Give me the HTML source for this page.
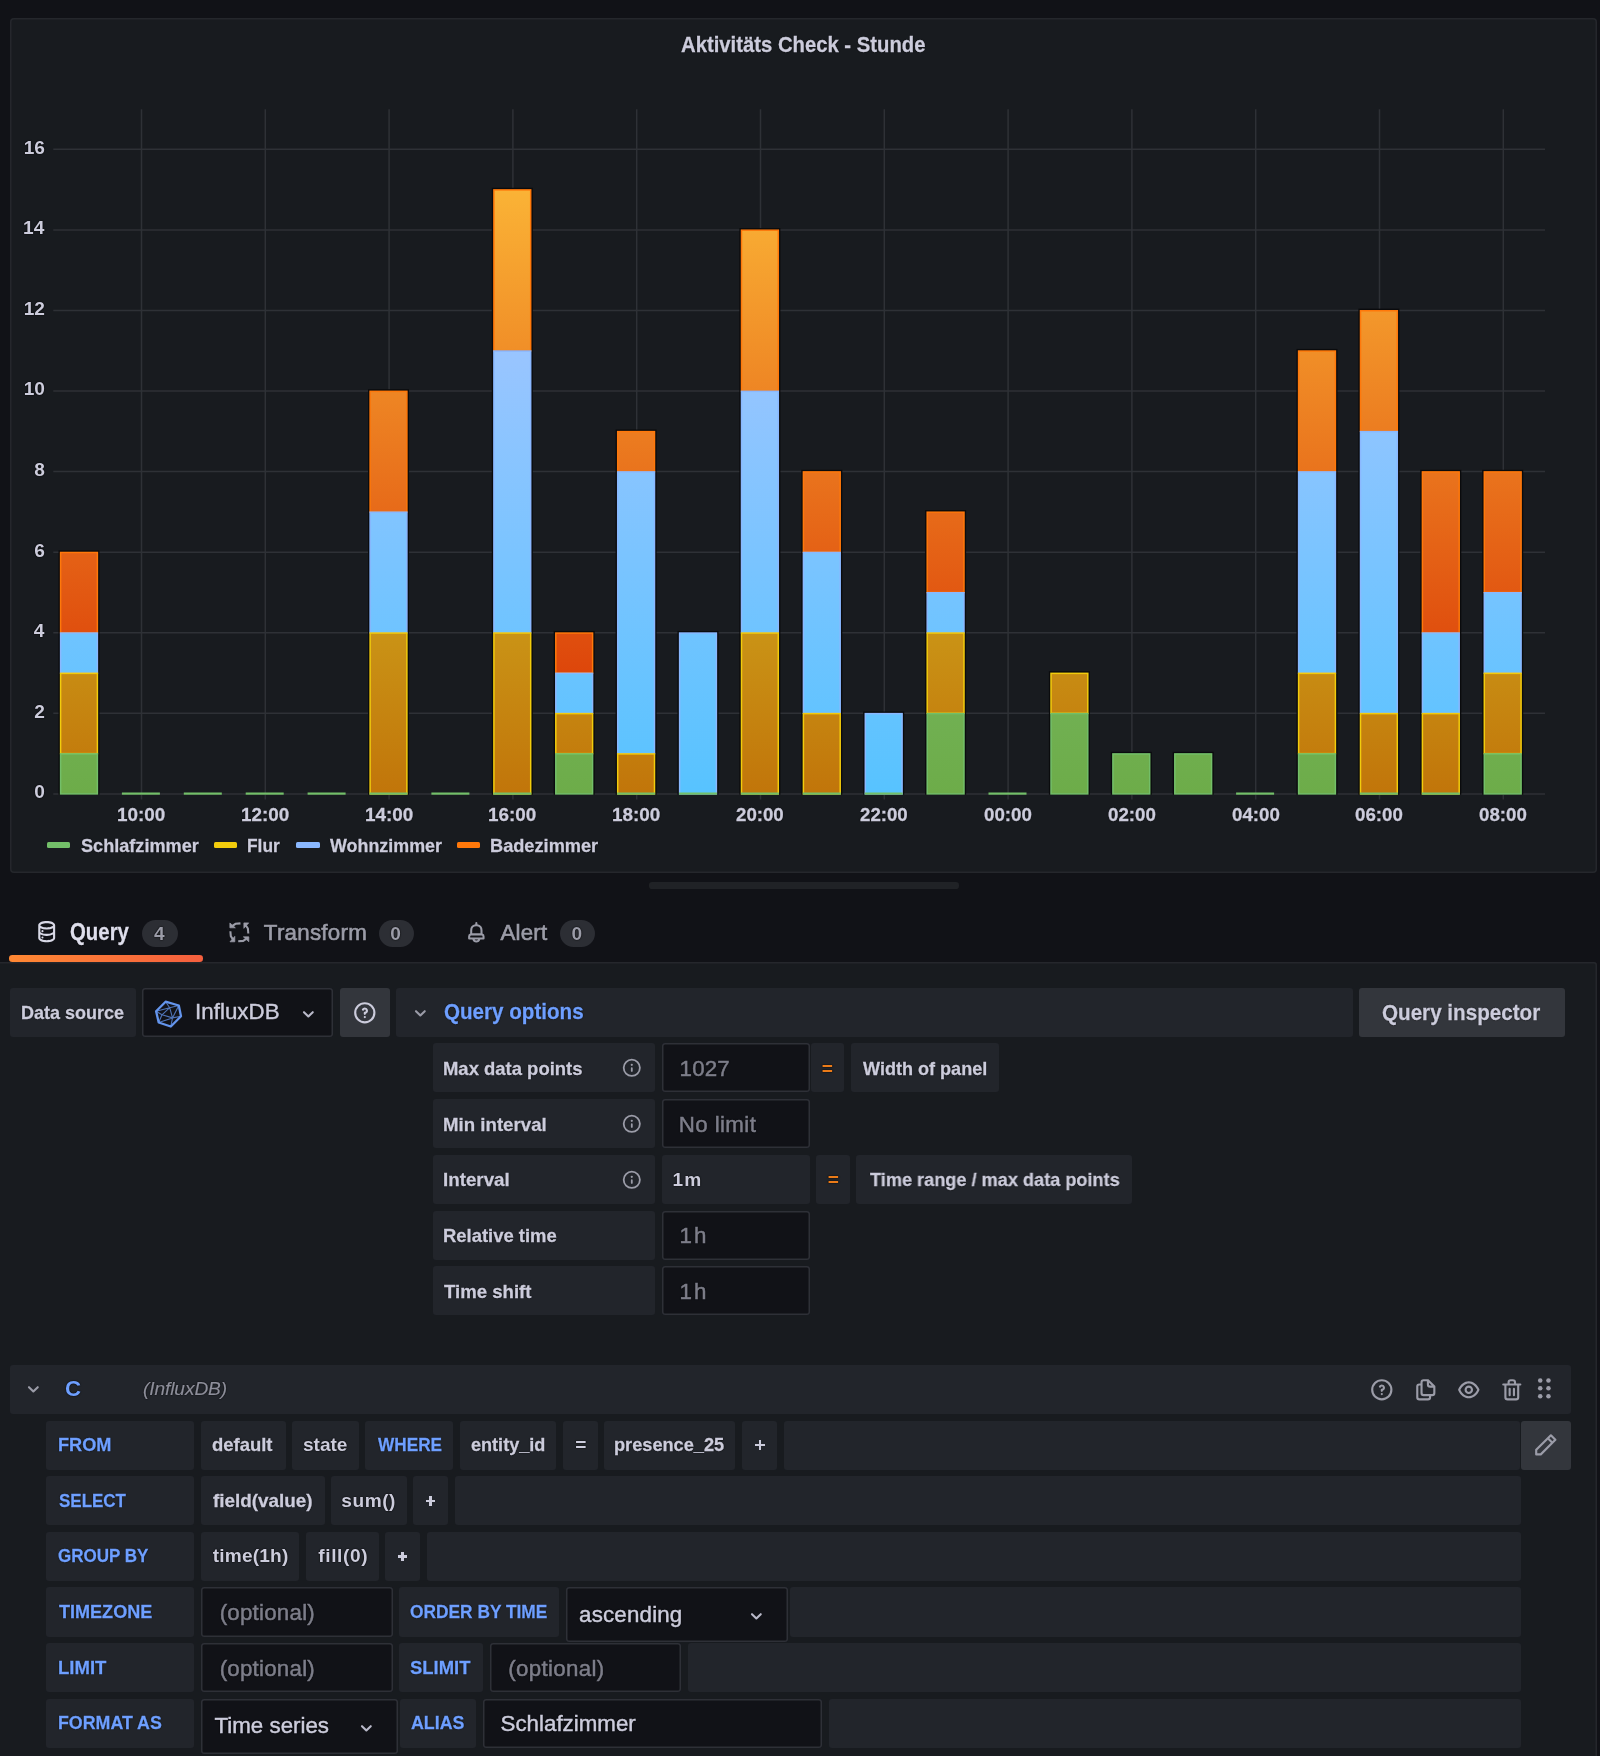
<!DOCTYPE html>
<html lang="de"><head><meta charset="utf-8"><title>Aktivitäts Check - Stunde</title>
<style>
html,body{margin:0;padding:0;background:#111217;}
body{width:1600px;height:1756px;position:relative;overflow:hidden;font-family:"Liberation Sans",sans-serif;}
.b{position:absolute;display:block;}
.t{position:absolute;white-space:pre;display:block;transform-origin:0 0;text-shadow:0 0 1.5px rgba(0,0,0,.95),0 0 1px rgba(0,0,0,.8);}
#root{position:absolute;left:0;top:0;width:1600px;height:1756px;will-change:transform;}
</style></head><body><div id="root">
<div class="b" style="left:9.50px;top:18.40px;width:1587.20px;height:854.20px;background:#181b1f;border-radius:4px;box-shadow:inset 0 0 0 1.5px #25272c;"></div>
<span class="t " style="left:681.09px;top:30.07px;font-size:22.31px;line-height:29px;color:#ccccdc;transform:scaleX(0.9092);font-weight:700;-webkit-text-stroke:0.3px #ccccdc;">Aktivitäts Check - Stunde</span>
<svg class="b" style="left:0;top:0" width="1600" height="880" viewBox="0 0 1600 880"><defs><linearGradient id="g0" gradientUnits="userSpaceOnUse" x1="0" y1="109.2" x2="0" y2="793.9"><stop offset="0" stop-color="#8dce96"/><stop offset="1" stop-color="#6dac49"/></linearGradient><linearGradient id="g1" gradientUnits="userSpaceOnUse" x1="0" y1="109.2" x2="0" y2="793.9"><stop offset="0" stop-color="#e6f53c"/><stop offset="1" stop-color="#c1750a"/></linearGradient><linearGradient id="g2" gradientUnits="userSpaceOnUse" x1="0" y1="109.2" x2="0" y2="793.9"><stop offset="0" stop-color="#bdc6ff"/><stop offset="1" stop-color="#57c3ff"/></linearGradient><linearGradient id="g3" gradientUnits="userSpaceOnUse" x1="0" y1="109.2" x2="0" y2="793.9"><stop offset="0" stop-color="#ffc53d"/><stop offset="1" stop-color="#d62b00"/></linearGradient></defs><path d="M53.3 793.90H1545 M53.3 713.33H1545 M53.3 632.75H1545 M53.3 552.17H1545 M53.3 471.60H1545 M53.3 391.03H1545 M53.3 310.45H1545 M53.3 229.88H1545 M53.3 149.30H1545 M141.50 109.2V799.5 M265.30 109.2V799.5 M389.10 109.2V799.5 M512.90 109.2V799.5 M636.70 109.2V799.5 M760.50 109.2V799.5 M884.30 109.2V799.5 M1008.10 109.2V799.5 M1131.90 109.2V799.5 M1255.70 109.2V799.5 M1379.50 109.2V799.5 M1503.30 109.2V799.5" stroke="#2e3136" stroke-width="1.5" fill="none"/><rect x="58.50" y="550.38" width="41" height="244.33" fill="#0a0b0d"/><rect x="60.60" y="552.47" width="36.8" height="80.28" fill="url(#g3)" stroke="#FF780A" stroke-width="1.5"/><rect x="60.60" y="633.05" width="36.8" height="39.99" fill="url(#g2)" stroke="#8AB8FF" stroke-width="1.5"/><rect x="60.60" y="673.34" width="36.8" height="80.27" fill="url(#g1)" stroke="#F2CC0C" stroke-width="1.5"/><rect x="60.60" y="753.91" width="36.8" height="39.99" fill="url(#g0)" stroke="#73BF69" stroke-width="1.5"/><rect x="121.90" y="792.50" width="38" height="2.2" fill="#73BF69"/><rect x="183.80" y="792.50" width="38" height="2.2" fill="#73BF69"/><rect x="245.70" y="792.50" width="38" height="2.2" fill="#73BF69"/><rect x="307.60" y="792.50" width="38" height="2.2" fill="#73BF69"/><rect x="368.00" y="389.23" width="41" height="405.47" fill="#0a0b0d"/><rect x="370.10" y="391.33" width="36.8" height="120.56" fill="url(#g3)" stroke="#FF780A" stroke-width="1.5"/><rect x="370.10" y="512.19" width="36.8" height="120.56" fill="url(#g2)" stroke="#8AB8FF" stroke-width="1.5"/><rect x="370.10" y="633.05" width="36.8" height="160.85" fill="url(#g1)" stroke="#F2CC0C" stroke-width="1.5"/><rect x="369.50" y="792.50" width="38" height="2.2" fill="#73BF69"/><rect x="431.40" y="792.50" width="38" height="2.2" fill="#73BF69"/><rect x="491.80" y="187.79" width="41" height="606.91" fill="#0a0b0d"/><rect x="493.90" y="189.89" width="36.8" height="160.85" fill="url(#g3)" stroke="#FF780A" stroke-width="1.5"/><rect x="493.90" y="351.04" width="36.8" height="281.71" fill="url(#g2)" stroke="#8AB8FF" stroke-width="1.5"/><rect x="493.90" y="633.05" width="36.8" height="160.85" fill="url(#g1)" stroke="#F2CC0C" stroke-width="1.5"/><rect x="493.30" y="792.50" width="38" height="2.2" fill="#73BF69"/><rect x="553.70" y="630.95" width="41" height="163.75" fill="#0a0b0d"/><rect x="555.80" y="633.05" width="36.8" height="39.99" fill="url(#g3)" stroke="#FF780A" stroke-width="1.5"/><rect x="555.80" y="673.34" width="36.8" height="39.99" fill="url(#g2)" stroke="#8AB8FF" stroke-width="1.5"/><rect x="555.80" y="713.62" width="36.8" height="39.99" fill="url(#g1)" stroke="#F2CC0C" stroke-width="1.5"/><rect x="555.80" y="753.91" width="36.8" height="39.99" fill="url(#g0)" stroke="#73BF69" stroke-width="1.5"/><rect x="615.60" y="429.51" width="41" height="365.19" fill="#0a0b0d"/><rect x="617.70" y="431.61" width="36.8" height="39.99" fill="url(#g3)" stroke="#FF780A" stroke-width="1.5"/><rect x="617.70" y="471.90" width="36.8" height="281.71" fill="url(#g2)" stroke="#8AB8FF" stroke-width="1.5"/><rect x="617.70" y="753.91" width="36.8" height="39.99" fill="url(#g1)" stroke="#F2CC0C" stroke-width="1.5"/><rect x="617.10" y="792.50" width="38" height="2.2" fill="#73BF69"/><rect x="677.50" y="630.95" width="41" height="163.75" fill="#0a0b0d"/><rect x="679.60" y="633.05" width="36.8" height="160.85" fill="url(#g2)" stroke="#8AB8FF" stroke-width="1.5"/><rect x="679.00" y="792.50" width="38" height="2.2" fill="#73BF69"/><rect x="739.40" y="228.08" width="41" height="566.62" fill="#0a0b0d"/><rect x="741.50" y="230.18" width="36.8" height="160.85" fill="url(#g3)" stroke="#FF780A" stroke-width="1.5"/><rect x="741.50" y="391.33" width="36.8" height="241.42" fill="url(#g2)" stroke="#8AB8FF" stroke-width="1.5"/><rect x="741.50" y="633.05" width="36.8" height="160.85" fill="url(#g1)" stroke="#F2CC0C" stroke-width="1.5"/><rect x="740.90" y="792.50" width="38" height="2.2" fill="#73BF69"/><rect x="801.30" y="469.80" width="41" height="324.90" fill="#0a0b0d"/><rect x="803.40" y="471.90" width="36.8" height="80.27" fill="url(#g3)" stroke="#FF780A" stroke-width="1.5"/><rect x="803.40" y="552.47" width="36.8" height="160.85" fill="url(#g2)" stroke="#8AB8FF" stroke-width="1.5"/><rect x="803.40" y="713.62" width="36.8" height="80.27" fill="url(#g1)" stroke="#F2CC0C" stroke-width="1.5"/><rect x="802.80" y="792.50" width="38" height="2.2" fill="#73BF69"/><rect x="863.20" y="711.53" width="41" height="83.17" fill="#0a0b0d"/><rect x="865.30" y="713.62" width="36.8" height="80.27" fill="url(#g2)" stroke="#8AB8FF" stroke-width="1.5"/><rect x="864.70" y="792.50" width="38" height="2.2" fill="#73BF69"/><rect x="925.10" y="510.09" width="41" height="284.61" fill="#0a0b0d"/><rect x="927.20" y="512.19" width="36.8" height="80.27" fill="url(#g3)" stroke="#FF780A" stroke-width="1.5"/><rect x="927.20" y="592.76" width="36.8" height="39.99" fill="url(#g2)" stroke="#8AB8FF" stroke-width="1.5"/><rect x="927.20" y="633.05" width="36.8" height="80.28" fill="url(#g1)" stroke="#F2CC0C" stroke-width="1.5"/><rect x="927.20" y="713.62" width="36.8" height="80.27" fill="url(#g0)" stroke="#73BF69" stroke-width="1.5"/><rect x="988.50" y="792.50" width="38" height="2.2" fill="#73BF69"/><rect x="1048.90" y="671.24" width="41" height="123.46" fill="#0a0b0d"/><rect x="1051.00" y="673.34" width="36.8" height="39.99" fill="url(#g1)" stroke="#F2CC0C" stroke-width="1.5"/><rect x="1051.00" y="713.62" width="36.8" height="80.27" fill="url(#g0)" stroke="#73BF69" stroke-width="1.5"/><rect x="1110.80" y="751.81" width="41" height="42.89" fill="#0a0b0d"/><rect x="1112.90" y="753.91" width="36.8" height="39.99" fill="url(#g0)" stroke="#73BF69" stroke-width="1.5"/><rect x="1172.70" y="751.81" width="41" height="42.89" fill="#0a0b0d"/><rect x="1174.80" y="753.91" width="36.8" height="39.99" fill="url(#g0)" stroke="#73BF69" stroke-width="1.5"/><rect x="1236.10" y="792.50" width="38" height="2.2" fill="#73BF69"/><rect x="1296.50" y="348.94" width="41" height="445.76" fill="#0a0b0d"/><rect x="1298.60" y="351.04" width="36.8" height="120.56" fill="url(#g3)" stroke="#FF780A" stroke-width="1.5"/><rect x="1298.60" y="471.90" width="36.8" height="201.14" fill="url(#g2)" stroke="#8AB8FF" stroke-width="1.5"/><rect x="1298.60" y="673.34" width="36.8" height="80.27" fill="url(#g1)" stroke="#F2CC0C" stroke-width="1.5"/><rect x="1298.60" y="753.91" width="36.8" height="39.99" fill="url(#g0)" stroke="#73BF69" stroke-width="1.5"/><rect x="1358.40" y="308.65" width="41" height="486.05" fill="#0a0b0d"/><rect x="1360.50" y="310.75" width="36.8" height="120.56" fill="url(#g3)" stroke="#FF780A" stroke-width="1.5"/><rect x="1360.50" y="431.61" width="36.8" height="281.71" fill="url(#g2)" stroke="#8AB8FF" stroke-width="1.5"/><rect x="1360.50" y="713.62" width="36.8" height="80.27" fill="url(#g1)" stroke="#F2CC0C" stroke-width="1.5"/><rect x="1359.90" y="792.50" width="38" height="2.2" fill="#73BF69"/><rect x="1420.30" y="469.80" width="41" height="324.90" fill="#0a0b0d"/><rect x="1422.40" y="471.90" width="36.8" height="160.85" fill="url(#g3)" stroke="#FF780A" stroke-width="1.5"/><rect x="1422.40" y="633.05" width="36.8" height="80.28" fill="url(#g2)" stroke="#8AB8FF" stroke-width="1.5"/><rect x="1422.40" y="713.62" width="36.8" height="80.27" fill="url(#g1)" stroke="#F2CC0C" stroke-width="1.5"/><rect x="1421.80" y="792.50" width="38" height="2.2" fill="#73BF69"/><rect x="1482.20" y="469.80" width="41" height="324.90" fill="#0a0b0d"/><rect x="1484.30" y="471.90" width="36.8" height="120.56" fill="url(#g3)" stroke="#FF780A" stroke-width="1.5"/><rect x="1484.30" y="592.76" width="36.8" height="80.28" fill="url(#g2)" stroke="#8AB8FF" stroke-width="1.5"/><rect x="1484.30" y="673.34" width="36.8" height="80.27" fill="url(#g1)" stroke="#F2CC0C" stroke-width="1.5"/><rect x="1484.30" y="753.91" width="36.8" height="39.99" fill="url(#g0)" stroke="#73BF69" stroke-width="1.5"/></svg>
<span class="t " style="left:34.36px;top:779.28px;font-size:19.11px;line-height:25px;color:#ccccdc;font-weight:700;">0</span>
<span class="t " style="left:34.27px;top:698.70px;font-size:19.11px;line-height:25px;color:#ccccdc;font-weight:700;">2</span>
<span class="t " style="left:33.69px;top:618.13px;font-size:19.11px;line-height:25px;color:#ccccdc;font-weight:700;">4</span>
<span class="t " style="left:34.27px;top:537.55px;font-size:19.11px;line-height:25px;color:#ccccdc;font-weight:700;">6</span>
<span class="t " style="left:34.17px;top:456.98px;font-size:19.11px;line-height:25px;color:#ccccdc;font-weight:700;">8</span>
<span class="t " style="left:23.76px;top:376.40px;font-size:19.11px;line-height:25px;color:#ccccdc;letter-spacing:-0.010px;font-weight:700;">10</span>
<span class="t " style="left:23.67px;top:295.83px;font-size:19.11px;line-height:25px;color:#ccccdc;letter-spacing:-0.010px;font-weight:700;">12</span>
<span class="t " style="left:23.09px;top:215.25px;font-size:19.11px;line-height:25px;color:#ccccdc;letter-spacing:-0.010px;font-weight:700;">14</span>
<span class="t " style="left:23.67px;top:134.68px;font-size:19.11px;line-height:25px;color:#ccccdc;letter-spacing:-0.010px;font-weight:700;">16</span>
<span class="t " style="left:116.92px;top:801.68px;font-size:19.11px;line-height:25px;color:#ccccdc;transform:scaleX(0.9869);font-weight:700;-webkit-text-stroke:0.3px #ccccdc;">10:00</span>
<span class="t " style="left:240.72px;top:801.68px;font-size:19.11px;line-height:25px;color:#ccccdc;transform:scaleX(0.9869);font-weight:700;-webkit-text-stroke:0.3px #ccccdc;">12:00</span>
<span class="t " style="left:364.52px;top:801.68px;font-size:19.11px;line-height:25px;color:#ccccdc;transform:scaleX(0.9869);font-weight:700;-webkit-text-stroke:0.3px #ccccdc;">14:00</span>
<span class="t " style="left:488.32px;top:801.68px;font-size:19.11px;line-height:25px;color:#ccccdc;transform:scaleX(0.9869);font-weight:700;-webkit-text-stroke:0.3px #ccccdc;">16:00</span>
<span class="t " style="left:612.12px;top:801.68px;font-size:19.11px;line-height:25px;color:#ccccdc;transform:scaleX(0.9869);font-weight:700;-webkit-text-stroke:0.3px #ccccdc;">18:00</span>
<span class="t " style="left:736.40px;top:801.68px;font-size:19.11px;line-height:25px;color:#ccccdc;transform:scaleX(0.9769);font-weight:700;-webkit-text-stroke:0.3px #ccccdc;">20:00</span>
<span class="t " style="left:860.20px;top:801.68px;font-size:19.11px;line-height:25px;color:#ccccdc;transform:scaleX(0.9769);font-weight:700;-webkit-text-stroke:0.3px #ccccdc;">22:00</span>
<span class="t " style="left:983.90px;top:801.68px;font-size:19.11px;line-height:25px;color:#ccccdc;transform:scaleX(0.9789);font-weight:700;-webkit-text-stroke:0.3px #ccccdc;">00:00</span>
<span class="t " style="left:1107.70px;top:801.68px;font-size:19.11px;line-height:25px;color:#ccccdc;transform:scaleX(0.9789);font-weight:700;-webkit-text-stroke:0.3px #ccccdc;">02:00</span>
<span class="t " style="left:1231.50px;top:801.68px;font-size:19.11px;line-height:25px;color:#ccccdc;transform:scaleX(0.9789);font-weight:700;-webkit-text-stroke:0.3px #ccccdc;">04:00</span>
<span class="t " style="left:1355.30px;top:801.68px;font-size:19.11px;line-height:25px;color:#ccccdc;transform:scaleX(0.9789);font-weight:700;-webkit-text-stroke:0.3px #ccccdc;">06:00</span>
<span class="t " style="left:1479.10px;top:801.68px;font-size:19.11px;line-height:25px;color:#ccccdc;transform:scaleX(0.9789);font-weight:700;-webkit-text-stroke:0.3px #ccccdc;">08:00</span>
<div class="b" style="left:46.90px;top:842.30px;width:23.20px;height:6.20px;background:#73BF69;border-radius:1.5px;"></div>
<span class="t " style="left:81.16px;top:832.68px;font-size:19.11px;line-height:25px;color:#ccccdc;transform:scaleX(0.9477);font-weight:700;-webkit-text-stroke:0.3px #ccccdc;">Schlafzimmer</span>
<div class="b" style="left:213.70px;top:842.30px;width:23.30px;height:6.20px;background:#F2CC0C;border-radius:1.5px;"></div>
<span class="t " style="left:247.47px;top:832.68px;font-size:19.11px;line-height:25px;color:#ccccdc;transform:scaleX(0.9078);font-weight:700;-webkit-text-stroke:0.3px #ccccdc;">Flur</span>
<div class="b" style="left:295.50px;top:842.30px;width:24.00px;height:6.20px;background:#8AB8FF;border-radius:1.5px;"></div>
<span class="t " style="left:330.00px;top:832.68px;font-size:19.11px;line-height:25px;color:#ccccdc;transform:scaleX(0.9360);font-weight:700;-webkit-text-stroke:0.3px #ccccdc;">Wohnzimmer</span>
<div class="b" style="left:457.40px;top:842.30px;width:22.60px;height:6.20px;background:#FF780A;border-radius:1.5px;"></div>
<span class="t " style="left:490.02px;top:832.68px;font-size:19.11px;line-height:25px;color:#ccccdc;transform:scaleX(0.9521);font-weight:700;-webkit-text-stroke:0.3px #ccccdc;">Badezimmer</span>
<div class="b" style="left:649.00px;top:882.40px;width:309.80px;height:6.20px;background:#202226;border-radius:3.1px;"></div>
<svg class="b" style="left:33.80px;top:919.30px;" width="25.40" height="25.40" viewBox="0 0 24 24" fill="#d8d8e6"><path d="M8,16.5a1,1,0,1,0,1,1A1,1,0,0,0,8,16.5ZM12,2C8,2,4,3.37,4,6V18c0,2.63,4,4,8,4s8-1.37,8-4V6C20,3.37,16,2,12,2Zm6,16c0,.71-2.28,2-6,2s-6-1.29-6-2V14.73A13.16,13.16,0,0,0,12,16a13.16,13.16,0,0,0,6-1.27Zm0-6c0,.71-2.28,2-6,2s-6-1.29-6-2V8.73A13.16,13.16,0,0,0,12,10a13.16,13.16,0,0,0,6-1.27ZM12,8C8.28,8,6,6.71,6,6s2.28-2,6-2,6,1.29,6,2S15.72,8,12,8ZM8,10.5a1,1,0,1,0,1,1A1,1,0,0,0,8,10.5Z"/></svg>
<span class="t " style="left:70.18px;top:916.82px;font-size:23.04px;line-height:30px;color:#dedeec;transform:scaleX(0.8848);font-weight:700;-webkit-text-stroke:0.3px #dedeec;">Query</span>
<div class="b" style="left:142.00px;top:919.70px;width:36.00px;height:27.80px;background:#2c2e34;border-radius:14px;"></div>
<span class="t " style="left:154.00px;top:920.58px;font-size:19.11px;line-height:25px;color:#9b9ca8;font-weight:700;">4</span>
<svg class="b" style="left:227.30px;top:919.60px;color:#9b9ca8" width="24.70" height="24.70" viewBox="0 0 24 24" fill="#9b9ca8"><g transform="rotate(0 12 12)"><path d="M13.100 3.300 8.300 3.700 5.300 5.600" fill="none" stroke="currentColor" stroke-width="2"/><path d="M2.800 2.900V7.600H8.100Z" fill="currentColor" stroke="currentColor" stroke-width=".7" stroke-linejoin="round"/></g><g transform="rotate(90 12 12)"><path d="M13.100 3.300 8.300 3.700 5.300 5.600" fill="none" stroke="currentColor" stroke-width="2"/><path d="M2.800 2.900V7.600H8.100Z" fill="currentColor" stroke="currentColor" stroke-width=".7" stroke-linejoin="round"/></g><g transform="rotate(180 12 12)"><path d="M13.100 3.300 8.300 3.700 5.300 5.600" fill="none" stroke="currentColor" stroke-width="2"/><path d="M2.800 2.900V7.600H8.100Z" fill="currentColor" stroke="currentColor" stroke-width=".7" stroke-linejoin="round"/></g><g transform="rotate(270 12 12)"><path d="M13.100 3.300 8.300 3.700 5.300 5.600" fill="none" stroke="currentColor" stroke-width="2"/><path d="M2.800 2.900V7.600H8.100Z" fill="currentColor" stroke="currentColor" stroke-width=".7" stroke-linejoin="round"/></g></svg>
<span class="t " style="left:263.85px;top:918.27px;font-size:22.31px;line-height:29px;color:#9b9ca8;letter-spacing:0.269px;-webkit-text-stroke:0.65px #9b9ca8;">Transform</span>
<div class="b" style="left:378.50px;top:919.70px;width:35.50px;height:27.80px;background:#2c2e34;border-radius:14px;"></div>
<span class="t " style="left:390.35px;top:920.58px;font-size:19.11px;line-height:25px;color:#9b9ca8;font-weight:700;">0</span>
<svg class="b" style="left:463.50px;top:920.00px;" width="24.70" height="24.70" viewBox="0 0 24 24" fill="#9b9ca8"><path d="M18,13.18V10a6,6,0,0,0-5-5.91V3a1,1,0,0,0-2,0V4.09A6,6,0,0,0,6,10v3.18A3,3,0,0,0,4,16v2a1,1,0,0,0,1,1H8.14a4,4,0,0,0,7.72,0H19a1,1,0,0,0,1-1V16A3,3,0,0,0,18,13.18ZM8,10a4,4,0,0,1,8,0v3H8Zm4,10a2,2,0,0,1-1.72-1h3.44A2,2,0,0,1,12,20Zm6-3H6V16a1,1,0,0,1,1-1H17a1,1,0,0,1,1,1Z"/></svg>
<span class="t " style="left:500.50px;top:918.27px;font-size:22.31px;line-height:29px;color:#9b9ca8;letter-spacing:0.191px;-webkit-text-stroke:0.65px #9b9ca8;">Alert</span>
<div class="b" style="left:559.60px;top:919.70px;width:35.40px;height:27.80px;background:#2c2e34;border-radius:14px;"></div>
<span class="t " style="left:571.40px;top:920.58px;font-size:19.11px;line-height:25px;color:#9b9ca8;font-weight:700;">0</span>
<div class="b" style="left:-5.00px;top:962.00px;width:1601.70px;height:838.00px;background:#181b1f;border-radius:3px;box-shadow:inset 0 0 0 1.5px #25272c;"></div>
<div class="b" style="left:9px;top:955.3px;width:194px;height:6.7px;border-radius:3.3px;background:linear-gradient(90deg,#ff8833,#f55f3e)"></div>
<div class="b" style="left:9.60px;top:988.00px;width:126.40px;height:49.20px;background:#22252b;border-radius:3px;"></div>
<span class="t " style="left:21.03px;top:999.88px;font-size:19.11px;line-height:25px;color:#ccccdc;transform:scaleX(0.9406);font-weight:700;-webkit-text-stroke:0.3px #ccccdc;">Data source</span>
<div class="b" style="left:142.40px;top:988.00px;width:191.00px;height:49.20px;background:#111217;border-radius:3px;box-shadow:inset 0 0 0 1.5px #2e3037;"></div>
<svg class="b" style="left:148.00px;top:992.00px;" width="44.00" height="44.00" viewBox="148 992 44 44" fill="#9b9ca8"><g fill="none" stroke="#6495ed" stroke-linejoin="round"><path stroke-width="2.300" d="M165.600 1001.700 178.800 1005.500 181 1016.200 170.800 1026.500 158.700 1022.500 156.100 1011.300Z"/><path stroke-width="1.100" stroke-opacity=".75" d="M162 1014.800 169.700 1007.700 172.500 1017.900ZM165.600 1001.700 169.700 1007.700 178.800 1005.500M169.700 1007.700 156.100 1011.300 162 1014.800 158.700 1022.500 172.500 1017.900 170.800 1026.500M172.500 1017.900 181 1016.200M172.500 1017.900 178.800 1005.500"/></g></svg>
<span class="t " style="left:194.99px;top:997.27px;font-size:22.31px;line-height:29px;color:#ccccdc;letter-spacing:0.043px;-webkit-text-stroke:0.45px #ccccdc;">InfluxDB</span>
<svg class="b" style="left:295.50px;top:1001.50px;" width="24.70" height="24.70" viewBox="0 0 24 24" fill="#b9b9c9"><path d="M17,9.17a1,1,0,0,0-1.410,0L12,12.710,8.460,9.170a1,1,0,0,0-1.410,0,1,1,0,0,0,0,1.420l4.240,4.240a1,1,0,0,0,1.420,0L17,10.590A1,1,0,0,0,17,9.170Z"/></svg>
<div class="b" style="left:340.00px;top:988.00px;width:49.60px;height:49.20px;background:#33363c;border-radius:3px;"></div>
<svg class="b" style="left:352.20px;top:999.50px;" width="25.60" height="25.60" viewBox="0 0 24 24" fill="#ccccdc"><path d="M11.290,15.290a1.580,1.580,0,0,0-.120.150.760.760,0,0,0-.090.180.640.640,0,0,0-.060.180,1.360,1.360,0,0,0,0,.200.840.840,0,0,0,.080.380.900.900,0,0,0,.540.540.940.940,0,0,0,.760,0,.900.900,0,0,0,.540-.540A1,1,0,0,0,13,16a1,1,0,0,0-.290-.710A1,1,0,0,0,11.290,15.290ZM12,2A10,10,0,1,0,22,12,10,10,0,0,0,12,2Zm0,18a8,8,0,1,1,8-8A8,8,0,0,1,12,20ZM12,7A3,3,0,0,0,9.400,8.500a1,1,0,1,0,1.730,1A1,1,0,0,1,12,9a1,1,0,0,1,0,2,1,1,0,0,0-1,1v1a1,1,0,0,0,2,0v-.180A3,3,0,0,0,12,7Z"/></svg>
<div class="b" style="left:396.00px;top:988.00px;width:956.50px;height:49.20px;background:#22252b;border-radius:3px;"></div>
<svg class="b" style="left:408.00px;top:1000.50px;" width="24.70" height="24.70" viewBox="0 0 24 24" fill="#9b9ca8"><path d="M17,9.17a1,1,0,0,0-1.410,0L12,12.710,8.460,9.170a1,1,0,0,0-1.410,0,1,1,0,0,0,0,1.420l4.240,4.240a1,1,0,0,0,1.420,0L17,10.590A1,1,0,0,0,17,9.170Z"/></svg>
<span class="t " style="left:443.58px;top:997.27px;font-size:22.31px;line-height:29px;color:#6e9fff;transform:scaleX(0.9239);font-weight:700;-webkit-text-stroke:0.3px #6e9fff;">Query options</span>
<div class="b" style="left:1358.80px;top:987.80px;width:205.90px;height:49.40px;background:#33363c;border-radius:3px;"></div>
<span class="t " style="left:1381.97px;top:997.57px;font-size:22.31px;line-height:29px;color:#ccccdc;transform:scaleX(0.9253);font-weight:700;-webkit-text-stroke:0.3px #ccccdc;">Query inspector</span>
<div class="b" style="left:433.00px;top:1043.40px;width:222.00px;height:49.10px;background:#22252b;border-radius:3px;"></div>
<span class="t " style="left:442.55px;top:1055.78px;font-size:19.11px;line-height:25px;color:#ccccdc;transform:scaleX(0.9658);font-weight:700;-webkit-text-stroke:0.3px #ccccdc;">Max data points</span>
<svg class="b" style="left:621.30px;top:1057.20px;" width="21.60" height="21.60" viewBox="0 0 24 24" fill="#9b9ca8"><path d="M12,2A10,10,0,1,0,22,12,10.011,10.011,0,0,0,12,2Zm0,18a8,8,0,1,1,8-8A8.009,8.009,0,0,1,12,20Zm0-8.500a1,1,0,0,0-1,1v3a1,1,0,0,0,2,0v-3A1,1,0,0,0,12,11.500Zm0-4a1.250,1.250,0,1,0,1.250,1.250A1.250,1.250,0,0,0,12,7.500Z"/></svg>
<div class="b" style="left:433.00px;top:1099.30px;width:222.00px;height:49.10px;background:#22252b;border-radius:3px;"></div>
<span class="t " style="left:442.54px;top:1111.68px;font-size:19.11px;line-height:25px;color:#ccccdc;transform:scaleX(0.9766);font-weight:700;-webkit-text-stroke:0.3px #ccccdc;">Min interval</span>
<svg class="b" style="left:621.30px;top:1113.10px;" width="21.60" height="21.60" viewBox="0 0 24 24" fill="#9b9ca8"><path d="M12,2A10,10,0,1,0,22,12,10.011,10.011,0,0,0,12,2Zm0,18a8,8,0,1,1,8-8A8.009,8.009,0,0,1,12,20Zm0-8.500a1,1,0,0,0-1,1v3a1,1,0,0,0,2,0v-3A1,1,0,0,0,12,11.500Zm0-4a1.250,1.250,0,1,0,1.250,1.250A1.250,1.250,0,0,0,12,7.500Z"/></svg>
<div class="b" style="left:433.00px;top:1155.00px;width:222.00px;height:49.10px;background:#22252b;border-radius:3px;"></div>
<span class="t " style="left:442.53px;top:1167.38px;font-size:19.11px;line-height:25px;color:#ccccdc;transform:scaleX(0.9816);font-weight:700;-webkit-text-stroke:0.3px #ccccdc;">Interval</span>
<svg class="b" style="left:621.30px;top:1168.80px;" width="21.60" height="21.60" viewBox="0 0 24 24" fill="#9b9ca8"><path d="M12,2A10,10,0,1,0,22,12,10.011,10.011,0,0,0,12,2Zm0,18a8,8,0,1,1,8-8A8.009,8.009,0,0,1,12,20Zm0-8.500a1,1,0,0,0-1,1v3a1,1,0,0,0,2,0v-3A1,1,0,0,0,12,11.500Zm0-4a1.250,1.250,0,1,0,1.250,1.250A1.250,1.250,0,0,0,12,7.500Z"/></svg>
<div class="b" style="left:433.00px;top:1210.70px;width:222.00px;height:49.10px;background:#22252b;border-radius:3px;"></div>
<span class="t " style="left:442.55px;top:1223.08px;font-size:19.11px;line-height:25px;color:#ccccdc;transform:scaleX(0.9647);font-weight:700;-webkit-text-stroke:0.3px #ccccdc;">Relative time</span>
<div class="b" style="left:433.00px;top:1266.40px;width:222.00px;height:49.10px;background:#22252b;border-radius:3px;"></div>
<span class="t " style="left:443.56px;top:1278.78px;font-size:19.11px;line-height:25px;color:#ccccdc;transform:scaleX(0.9728);font-weight:700;-webkit-text-stroke:0.3px #ccccdc;">Time shift</span>
<div class="b" style="left:662.00px;top:1043.40px;width:148.00px;height:49.10px;background:#111217;border-radius:3px;box-shadow:inset 0 0 0 1.5px #2e3037;"></div>
<span class="t " style="left:679.58px;top:1053.67px;font-size:22.31px;line-height:29px;color:#7d7e8a;letter-spacing:0.179px;-webkit-text-stroke:0.5px #7d7e8a;">1027</span>
<div class="b" style="left:811.00px;top:1043.40px;width:32.75px;height:49.10px;background:#22252b;border-radius:3px;"></div>
<span class="t " style="left:821.64px;top:1055.58px;font-size:19.11px;line-height:25px;color:#eb7b18;font-weight:700;">=</span>
<div class="b" style="left:850.50px;top:1043.40px;width:148.25px;height:49.10px;background:#22252b;border-radius:3px;"></div>
<span class="t " style="left:863.25px;top:1055.78px;font-size:19.11px;line-height:25px;color:#ccccdc;transform:scaleX(0.9451);font-weight:700;-webkit-text-stroke:0.3px #ccccdc;">Width of panel</span>
<div class="b" style="left:662.00px;top:1099.30px;width:148.00px;height:49.10px;background:#111217;border-radius:3px;box-shadow:inset 0 0 0 1.5px #2e3037;"></div>
<span class="t " style="left:678.72px;top:1109.57px;font-size:22.31px;line-height:29px;color:#7d7e8a;letter-spacing:0.408px;-webkit-text-stroke:0.5px #7d7e8a;">No limit</span>
<div class="b" style="left:662.00px;top:1155.00px;width:148.00px;height:49.10px;background:#22252b;border-radius:3px;"></div>
<span class="t " style="left:672.60px;top:1167.38px;font-size:19.11px;line-height:25px;color:#ccccdc;letter-spacing:0.929px;font-weight:700;">1m</span>
<div class="b" style="left:816.25px;top:1155.00px;width:33.75px;height:49.10px;background:#22252b;border-radius:3px;"></div>
<span class="t " style="left:827.64px;top:1167.18px;font-size:19.11px;line-height:25px;color:#eb7b18;font-weight:700;">=</span>
<div class="b" style="left:856.25px;top:1155.00px;width:275.75px;height:49.10px;background:#22252b;border-radius:3px;"></div>
<span class="t " style="left:869.82px;top:1167.38px;font-size:19.11px;line-height:25px;color:#ccccdc;transform:scaleX(0.9494);font-weight:700;-webkit-text-stroke:0.3px #ccccdc;">Time range / max data points</span>
<div class="b" style="left:662.00px;top:1210.70px;width:148.00px;height:49.10px;background:#111217;border-radius:3px;box-shadow:inset 0 0 0 1.5px #2e3037;"></div>
<span class="t " style="left:679.58px;top:1220.97px;font-size:22.31px;line-height:29px;color:#7d7e8a;letter-spacing:1.998px;-webkit-text-stroke:0.5px #7d7e8a;">1h</span>
<div class="b" style="left:662.00px;top:1266.40px;width:148.00px;height:49.10px;background:#111217;border-radius:3px;box-shadow:inset 0 0 0 1.5px #2e3037;"></div>
<span class="t " style="left:679.58px;top:1276.67px;font-size:22.31px;line-height:29px;color:#7d7e8a;letter-spacing:1.998px;-webkit-text-stroke:0.5px #7d7e8a;">1h</span>
<div class="b" style="left:9.50px;top:1365.00px;width:1561.20px;height:48.80px;background:#22252b;border-radius:3px;"></div>
<svg class="b" style="left:21.40px;top:1377.20px;" width="24.70" height="24.70" viewBox="0 0 24 24" fill="#9b9ca8"><path d="M17,9.17a1,1,0,0,0-1.410,0L12,12.710,8.460,9.170a1,1,0,0,0-1.410,0,1,1,0,0,0,0,1.420l4.240,4.240a1,1,0,0,0,1.420,0L17,10.590A1,1,0,0,0,17,9.170Z"/></svg>
<span class="t " style="left:65.11px;top:1374.07px;font-size:22.31px;line-height:29px;color:#6e9fff;font-weight:700;">C</span>
<span class="t " style="left:142.89px;top:1376.48px;font-size:19.11px;line-height:25px;color:#8e8f9b;letter-spacing:-0.076px;font-style:italic;-webkit-text-stroke:0.2px #8e8f9b;">(InfluxDB)</span>
<svg class="b" style="left:1369.20px;top:1376.70px;" width="25.60" height="25.60" viewBox="0 0 24 24" fill="#9b9ca8"><path d="M11.290,15.290a1.580,1.580,0,0,0-.120.150.760.760,0,0,0-.090.180.640.640,0,0,0-.060.180,1.360,1.360,0,0,0,0,.200.840.840,0,0,0,.080.380.900.900,0,0,0,.540.540.940.940,0,0,0,.760,0,.900.900,0,0,0,.540-.540A1,1,0,0,0,13,16a1,1,0,0,0-.290-.710A1,1,0,0,0,11.290,15.290ZM12,2A10,10,0,1,0,22,12,10,10,0,0,0,12,2Zm0,18a8,8,0,1,1,8-8A8,8,0,0,1,12,20ZM12,7A3,3,0,0,0,9.400,8.500a1,1,0,1,0,1.730,1A1,1,0,0,1,12,9a1,1,0,0,1,0,2,1,1,0,0,0-1,1v1a1,1,0,0,0,2,0v-.180A3,3,0,0,0,12,7Z"/></svg>
<svg class="b" style="left:1412.60px;top:1376.70px;" width="25.60" height="25.60" viewBox="0 0 24 24" fill="#9b9ca8"><path d="M21,8.940a1.310,1.310,0,0,0-.060-.270l0-.090a1.070,1.070,0,0,0-.190-.280h0l-6-6h0a1.070,1.070,0,0,0-.280-.190.320.320,0,0,0-.090,0A.880.880,0,0,0,14.050,2H10A3,3,0,0,0,7,5V6H6A3,3,0,0,0,3,9V19a3,3,0,0,0,3,3h8a3,3,0,0,0,3-3V18h1a3,3,0,0,0,3-3V9S21,9,21,8.940ZM15,5.410,17.590,8H16a1,1,0,0,1-1-1ZM15,19a1,1,0,0,1-1,1H6a1,1,0,0,1-1-1V9A1,1,0,0,1,6,8H7v7a3,3,0,0,0,3,3h5Zm4-4a1,1,0,0,1-1,1H10a1,1,0,0,1-1-1V5a1,1,0,0,1,1-1h3V7a3,3,0,0,0,3,3h3Z"/></svg>
<svg class="b" style="left:1455.80px;top:1376.70px;" width="25.60" height="25.60" viewBox="0 0 24 24" fill="#9b9ca8"><path d="M21.920,11.600C19.900,6.910,16.100,4,12,4S4.100,6.910,2.080,11.600a1,1,0,0,0,0,.800C4.100,17.090,7.900,20,12,20s7.900-2.910,9.920-7.600A1,1,0,0,0,21.920,11.600ZM12,18c-3.170,0-6.170-2.290-7.900-6C5.830,8.290,8.830,6,12,6s6.170,2.290,7.900,6C18.170,15.710,15.170,18,12,18ZM12,8a4,4,0,1,0,4,4A4,4,0,0,0,12,8Zm0,6a2,2,0,1,1,2-2A2,2,0,0,1,12,14Z"/></svg>
<svg class="b" style="left:1498.90px;top:1376.90px;" width="25.60" height="25.60" viewBox="0 0 24 24" fill="#9b9ca8"><path d="M10,18a1,1,0,0,0,1-1V11a1,1,0,0,0-2,0v6A1,1,0,0,0,10,18ZM20,6H16V5a3,3,0,0,0-3-3H11A3,3,0,0,0,8,5V6H4A1,1,0,0,0,4,8H5V19a3,3,0,0,0,3,3h8a3,3,0,0,0,3-3V8h1a1,1,0,0,0,0-2ZM10,5a1,1,0,0,1,1-1h2a1,1,0,0,1,1,1V6H10Zm7,14a1,1,0,0,1-1,1H8a1,1,0,0,1-1-1V8H17Zm-3-1a1,1,0,0,0,1-1V11a1,1,0,0,0-2,0v6A1,1,0,0,0,14,18Z"/></svg>
<svg class="b" style="left:1532.00px;top:1375.70px;" width="24.70" height="24.70" viewBox="0 0 24 24" fill="#9b9ca8"><circle cx="8" cy="4.300" r="2.200"/><circle cx="16" cy="4.300" r="2.200"/><circle cx="8" cy="12" r="2.200"/><circle cx="16" cy="12" r="2.200"/><circle cx="8" cy="19.700" r="2.200"/><circle cx="16" cy="19.700" r="2.200"/></svg>
<div class="b" style="left:46.30px;top:1420.60px;width:148.10px;height:49.10px;background:#22252b;border-radius:3px;"></div>
<span class="t " style="left:57.72px;top:1431.98px;font-size:19.11px;line-height:25px;color:#6e9fff;transform:scaleX(0.9499);font-weight:700;-webkit-text-stroke:0.3px #6e9fff;">FROM</span>
<div class="b" style="left:200.80px;top:1420.60px;width:85.00px;height:49.10px;background:#22252b;border-radius:3px;"></div>
<span class="t " style="left:212.26px;top:1431.98px;font-size:19.11px;line-height:25px;color:#ccccdc;transform:scaleX(0.9654);font-weight:700;-webkit-text-stroke:0.3px #ccccdc;">default</span>
<div class="b" style="left:292.00px;top:1420.60px;width:66.60px;height:49.10px;background:#22252b;border-radius:3px;"></div>
<span class="t " style="left:303.08px;top:1431.98px;font-size:19.11px;line-height:25px;color:#ccccdc;letter-spacing:-0.095px;font-weight:700;">state</span>
<div class="b" style="left:365.00px;top:1420.60px;width:87.60px;height:49.10px;background:#22252b;border-radius:3px;"></div>
<span class="t " style="left:377.60px;top:1431.98px;font-size:19.11px;line-height:25px;color:#6e9fff;transform:scaleX(0.9003);font-weight:700;-webkit-text-stroke:0.3px #6e9fff;">WHERE</span>
<div class="b" style="left:459.50px;top:1420.60px;width:96.90px;height:49.10px;background:#22252b;border-radius:3px;"></div>
<span class="t " style="left:470.87px;top:1431.98px;font-size:19.11px;line-height:25px;color:#ccccdc;transform:scaleX(0.9461);font-weight:700;-webkit-text-stroke:0.3px #ccccdc;">entity_id</span>
<div class="b" style="left:563.00px;top:1420.60px;width:35.00px;height:49.10px;background:#22252b;border-radius:3px;"></div>
<span class="t " style="left:575.24px;top:1431.98px;font-size:19.11px;line-height:25px;color:#ccccdc;font-weight:700;">=</span>
<div class="b" style="left:604.40px;top:1420.60px;width:131.10px;height:49.10px;background:#22252b;border-radius:3px;"></div>
<span class="t " style="left:614.32px;top:1431.98px;font-size:19.11px;line-height:25px;color:#ccccdc;transform:scaleX(0.9510);font-weight:700;-webkit-text-stroke:0.3px #ccccdc;">presence_25</span>
<div class="b" style="left:742.40px;top:1420.60px;width:35.10px;height:49.10px;background:#22252b;border-radius:3px;"></div>
<div class="b" style="left:755.15px;top:1443.95px;width:9.6px;height:2.5px;background:#ccccdc"></div><div class="b" style="left:758.70px;top:1440.40px;width:2.5px;height:9.6px;background:#ccccdc"></div>
<div class="b" style="left:784.00px;top:1420.60px;width:736.40px;height:49.10px;background:#22252b;border-radius:3px;"></div>
<div class="b" style="left:1520.90px;top:1420.50px;width:49.80px;height:49.60px;background:#33363c;border-radius:3px;"></div>
<svg class="b" style="left:1532.50px;top:1432.10px;" width="25.60" height="25.60" viewBox="0 0 24 24" fill="#9b9ca8"><path d="M22,7.240a1,1,0,0,0-.290-.710L17.470,2.290A1,1,0,0,0,16.760,2a1,1,0,0,0-.710.290L13.220,5.120h0L2.290,16.050a1,1,0,0,0-.290.710V21a1,1,0,0,0,1,1H7.240A1,1,0,0,0,8,21.710L18.870,10.780h0L21.710,8a1.190,1.190,0,0,0,.220-.330,1,1,0,0,0,0-.240.700.700,0,0,0,0-.140ZM6.830,20H4V17.170l9.930-9.930,2.830,2.830ZM18.170,8.660,15.340,5.830l1.420-1.410,2.820,2.820Z"/></svg>
<div class="b" style="left:46.30px;top:1476.23px;width:148.10px;height:49.10px;background:#22252b;border-radius:3px;"></div>
<span class="t " style="left:58.59px;top:1487.61px;font-size:19.11px;line-height:25px;color:#6e9fff;transform:scaleX(0.8884);font-weight:700;-webkit-text-stroke:0.3px #6e9fff;">SELECT</span>
<div class="b" style="left:201.00px;top:1476.23px;width:123.60px;height:49.10px;background:#22252b;border-radius:3px;"></div>
<span class="t " style="left:212.72px;top:1487.61px;font-size:19.11px;line-height:25px;color:#ccccdc;transform:scaleX(0.9874);font-weight:700;-webkit-text-stroke:0.3px #ccccdc;">field(value)</span>
<div class="b" style="left:331.00px;top:1476.23px;width:75.50px;height:49.10px;background:#22252b;border-radius:3px;"></div>
<span class="t " style="left:341.33px;top:1487.61px;font-size:19.11px;line-height:25px;color:#ccccdc;letter-spacing:0.512px;font-weight:700;">sum()</span>
<div class="b" style="left:413.00px;top:1476.23px;width:35.00px;height:49.10px;background:#22252b;border-radius:3px;"></div>
<div class="b" style="left:425.70px;top:1499.58px;width:9.6px;height:2.5px;background:#ccccdc"></div><div class="b" style="left:429.25px;top:1496.03px;width:2.5px;height:9.6px;background:#ccccdc"></div>
<div class="b" style="left:455.00px;top:1476.23px;width:1066.00px;height:49.10px;background:#22252b;border-radius:3px;"></div>
<div class="b" style="left:46.30px;top:1531.86px;width:148.10px;height:49.10px;background:#22252b;border-radius:3px;"></div>
<span class="t " style="left:58.42px;top:1543.24px;font-size:19.11px;line-height:25px;color:#6e9fff;transform:scaleX(0.8894);font-weight:700;-webkit-text-stroke:0.3px #6e9fff;">GROUP BY</span>
<div class="b" style="left:201.00px;top:1531.86px;width:98.40px;height:49.10px;background:#22252b;border-radius:3px;"></div>
<span class="t " style="left:212.81px;top:1543.24px;font-size:19.11px;line-height:25px;color:#ccccdc;letter-spacing:0.173px;font-weight:700;">time(1h)</span>
<div class="b" style="left:306.00px;top:1531.86px;width:72.60px;height:49.10px;background:#22252b;border-radius:3px;"></div>
<span class="t " style="left:318.31px;top:1543.24px;font-size:19.11px;line-height:25px;color:#ccccdc;letter-spacing:0.595px;font-weight:700;">fill(0)</span>
<div class="b" style="left:385.00px;top:1531.86px;width:35.30px;height:49.10px;background:#22252b;border-radius:3px;"></div>
<div class="b" style="left:397.85px;top:1555.21px;width:9.6px;height:2.5px;background:#ccccdc"></div><div class="b" style="left:401.40px;top:1551.66px;width:2.5px;height:9.6px;background:#ccccdc"></div>
<div class="b" style="left:427.00px;top:1531.86px;width:1094.00px;height:49.10px;background:#22252b;border-radius:3px;"></div>
<div class="b" style="left:46.30px;top:1587.49px;width:148.10px;height:49.10px;background:#22252b;border-radius:3px;"></div>
<span class="t " style="left:58.92px;top:1598.87px;font-size:19.11px;line-height:25px;color:#6e9fff;transform:scaleX(0.9444);font-weight:700;-webkit-text-stroke:0.3px #6e9fff;">TIMEZONE</span>
<div class="b" style="left:201.30px;top:1587.49px;width:191.30px;height:49.10px;background:#111217;border-radius:3px;box-shadow:inset 0 0 0 1.5px #2e3037;"></div>
<span class="t " style="left:219.66px;top:1598.16px;font-size:22.31px;line-height:29px;color:#7d7e8a;letter-spacing:0.238px;-webkit-text-stroke:0.5px #7d7e8a;">(optional)</span>
<div class="b" style="left:398.60px;top:1587.49px;width:160.80px;height:49.10px;background:#22252b;border-radius:3px;"></div>
<span class="t " style="left:410.31px;top:1598.87px;font-size:19.11px;line-height:25px;color:#6e9fff;transform:scaleX(0.9066);font-weight:700;-webkit-text-stroke:0.3px #6e9fff;">ORDER BY TIME</span>
<div class="b" style="left:566.00px;top:1587.49px;width:222.00px;height:54.30px;background:#111217;border-radius:3px;box-shadow:inset 0 0 0 1.5px #2e3037;"></div>
<span class="t " style="left:579.11px;top:1600.06px;font-size:22.31px;line-height:29px;color:#ccccdc;letter-spacing:0.187px;-webkit-text-stroke:0.45px #ccccdc;">ascending</span>
<svg class="b" style="left:743.70px;top:1604.19px;" width="24.70" height="24.70" viewBox="0 0 24 24" fill="#b9b9c9"><path d="M17,9.17a1,1,0,0,0-1.410,0L12,12.710,8.460,9.170a1,1,0,0,0-1.410,0,1,1,0,0,0,0,1.420l4.240,4.240a1,1,0,0,0,1.420,0L17,10.590A1,1,0,0,0,17,9.170Z"/></svg>
<div class="b" style="left:790.00px;top:1587.49px;width:731.00px;height:49.10px;background:#22252b;border-radius:3px;"></div>
<div class="b" style="left:46.30px;top:1643.12px;width:148.10px;height:49.10px;background:#22252b;border-radius:3px;"></div>
<span class="t " style="left:58.04px;top:1654.50px;font-size:19.11px;line-height:25px;color:#6e9fff;transform:scaleX(0.9702);font-weight:700;-webkit-text-stroke:0.3px #6e9fff;">LIMIT</span>
<div class="b" style="left:201.30px;top:1643.12px;width:191.30px;height:49.10px;background:#111217;border-radius:3px;box-shadow:inset 0 0 0 1.5px #2e3037;"></div>
<span class="t " style="left:219.66px;top:1653.79px;font-size:22.31px;line-height:29px;color:#7d7e8a;letter-spacing:0.238px;-webkit-text-stroke:0.5px #7d7e8a;">(optional)</span>
<div class="b" style="left:398.60px;top:1643.12px;width:84.90px;height:49.10px;background:#22252b;border-radius:3px;"></div>
<span class="t " style="left:410.45px;top:1654.50px;font-size:19.11px;line-height:25px;color:#6e9fff;transform:scaleX(0.9641);font-weight:700;-webkit-text-stroke:0.3px #6e9fff;">SLIMIT</span>
<div class="b" style="left:490.40px;top:1643.12px;width:190.60px;height:49.10px;background:#111217;border-radius:3px;box-shadow:inset 0 0 0 1.5px #2e3037;"></div>
<span class="t " style="left:508.26px;top:1653.79px;font-size:22.31px;line-height:29px;color:#7d7e8a;letter-spacing:0.338px;-webkit-text-stroke:0.5px #7d7e8a;">(optional)</span>
<div class="b" style="left:688.00px;top:1643.12px;width:833.00px;height:49.10px;background:#22252b;border-radius:3px;"></div>
<div class="b" style="left:46.30px;top:1698.75px;width:148.10px;height:49.10px;background:#22252b;border-radius:3px;"></div>
<span class="t " style="left:58.09px;top:1710.13px;font-size:19.11px;line-height:25px;color:#6e9fff;transform:scaleX(0.9315);font-weight:700;-webkit-text-stroke:0.3px #6e9fff;">FORMAT AS</span>
<div class="b" style="left:201.30px;top:1699.35px;width:196.70px;height:54.40px;background:#111217;border-radius:3px;box-shadow:inset 0 0 0 1.5px #2e3037;"></div>
<span class="t " style="left:214.55px;top:1710.72px;font-size:22.31px;line-height:29px;color:#ccccdc;letter-spacing:0.003px;-webkit-text-stroke:0.45px #ccccdc;">Time series</span>
<svg class="b" style="left:353.80px;top:1715.65px;" width="24.70" height="24.70" viewBox="0 0 24 24" fill="#b9b9c9"><path d="M17,9.17a1,1,0,0,0-1.410,0L12,12.710,8.460,9.170a1,1,0,0,0-1.410,0,1,1,0,0,0,0,1.420l4.240,4.240a1,1,0,0,0,1.420,0L17,10.590A1,1,0,0,0,17,9.170Z"/></svg>
<div class="b" style="left:399.50px;top:1698.75px;width:76.50px;height:49.10px;background:#22252b;border-radius:3px;"></div>
<span class="t " style="left:410.55px;top:1710.13px;font-size:19.11px;line-height:25px;color:#6e9fff;transform:scaleX(0.9327);font-weight:700;-webkit-text-stroke:0.3px #6e9fff;">ALIAS</span>
<div class="b" style="left:483.00px;top:1698.75px;width:338.60px;height:49.10px;background:#111217;border-radius:3px;box-shadow:inset 0 0 0 1.5px #2e3037;"></div>
<span class="t " style="left:500.50px;top:1709.02px;font-size:22.31px;line-height:29px;color:#ccccdc;letter-spacing:0.022px;-webkit-text-stroke:0.45px #ccccdc;">Schlafzimmer</span>
<div class="b" style="left:828.50px;top:1698.75px;width:692.50px;height:49.10px;background:#22252b;border-radius:3px;"></div>
</div></body></html>
